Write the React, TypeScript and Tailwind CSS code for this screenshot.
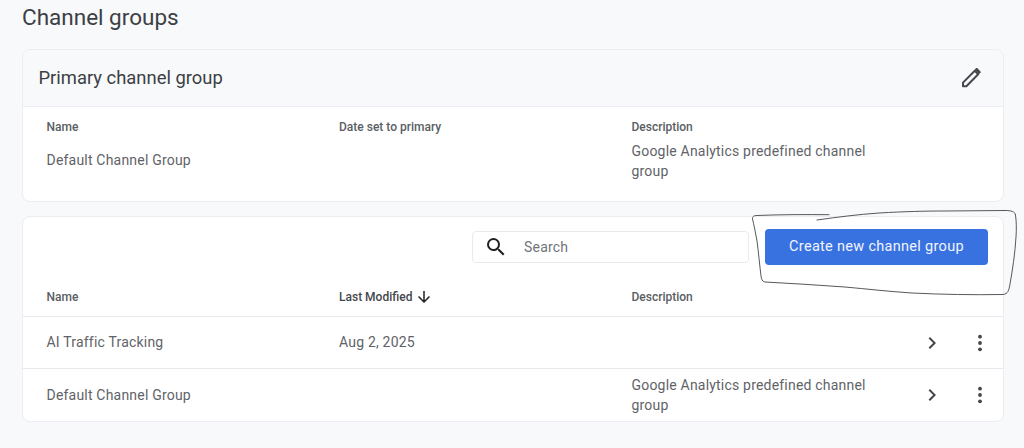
const font = { fontFamily: "Roboto, sans-serif" };

function HeadCell({ children }: { children: React.ReactNode }) {
  return <div className="text-[12px] leading-[16px] font-medium text-[#5a5e63]">{children}</div>;
}

function Pencil() {
  return (
    <svg width="24" height="24" viewBox="0 0 24 24" fill="none" className="text-[#44474c]">
      <path d="M4 20.2v-3.6L15.8 4.8l3.4 3.4L7.4 20.2H4Z" stroke="currentColor" strokeWidth="2" strokeLinejoin="round" />
      <path d="M15.6 3.6 17 2.3c.4-.4 1-.4 1.4 0l3.1 3.1c.4.4.4 1 0 1.4l-1.4 1.3-4.5-4.5Z" fill="currentColor" />
    </svg>
  );
}

function SearchIcon() {
  return (
    <svg width="24" height="24" viewBox="0 0 24 24" fill="#202124">
      <path d="M15.500 14h-.79l-.28-.27A6.470 6.470 0 0 0 16 9.500 6.500 6.500 0 1 0 9.500 16c1.610 0 3.090-.59 4.230-1.570l.27.28v.79l5 4.990L20.490 19l-4.990-5Zm-6 0C7.010 14 5 11.990 5 9.500S7.010 5 9.500 5 14 7.010 14 9.500 11.990 14 9.500 14Z" />
    </svg>
  );
}

function SortArrow() {
  return (
    <svg width="18" height="18" viewBox="0 0 24 24" fill="#202124">
      <path d="m20 12-1.410-1.410L13 16.170V4h-2v12.170l-5.580-5.590L4 12l8 8 8-8Z" />
    </svg>
  );
}

function RowIcons() {
  return (
    <div className="flex items-center gap-[24px] pr-[11px]">
      <svg width="24" height="24" viewBox="0 0 24 24" fill="#44474c">
        <path d="M8.590 16.590 13.170 12 8.590 7.410 10 6l6 6-6 6-1.410-1.410Z" />
      </svg>
      <svg width="24" height="24" viewBox="0 0 24 24" fill="#44474c">
        <circle cx="12" cy="5.700" r="1.900" />
        <circle cx="12" cy="12" r="1.900" />
        <circle cx="12" cy="18.300" r="1.900" />
      </svg>
    </div>
  );
}

function Scribble() {
  return (
    <svg width="1024" height="448" viewBox="0 0 1024 448" fill="none" className="absolute left-0 top-0 pointer-events-none">
      <path
        d="M817 220C838 217 858 214.500 879 213C905 211.500 925 211 945 211L1005 210.500C1011 210.500 1015 211.500 1015.500 215C1016.500 222 1016.500 229 1016 237C1015 254 1012.500 270 1010 284C1009 290 1008 294 1003 294.500C973 295 942 294.500 912 293C889 291.500 867 289 845 287C818 285 792 283.500 765 282C762 281.500 761.500 279 761 276C759.500 264 758.500 252 757 241C755.500 233 754 225 752.500 219C752 216.500 754 215.500 757 215.500C781 214.500 805 214.500 829 214.700"
        stroke="#55585d"
        strokeWidth="1"
        strokeLinecap="round"
      />
    </svg>
  );
}

export default function App() {
  return (
    <div className="relative h-[448px] w-[1024px] overflow-hidden bg-[#f8f9fb] pl-[22px] pr-[20px]" style={font}>
      <h1 className="h-[49px] pt-[3px] text-[22.500px] leading-[28px] font-normal text-[#3c4043]">Channel groups</h1>

      {/* primary group */}
      <section className="h-[153px] overflow-hidden rounded-[8px] border border-[#ebedf0] bg-white">
        <div className="flex h-[57px] items-center justify-between border-b border-[#ebedf0] bg-[#f8f9fb] pl-[15.500px] pr-[20px]">
          <h2 className="text-[18.400px] leading-[24px] font-normal text-[#3c4043]">Primary channel group</h2>
          <Pencil />
        </div>
        <div className="grid grid-cols-[292.500px_292.500px_1fr] pl-[23.500px] pt-[12px]">
          <div>
            <HeadCell>Name</HeadCell>
            <div className="mt-[15px] text-[14px] leading-[20px] tracking-[0.2px] text-[#5f6368]">Default Channel Group</div>
          </div>
          <HeadCell>Date set to primary</HeadCell>
          <div>
            <HeadCell>Description</HeadCell>
            <div className="mt-[6px] w-[260px] text-[14px] leading-[20px] tracking-[0.2px] text-[#5f6368]">
              Google Analytics predefined channel group
            </div>
          </div>
        </div>
      </section>

      {/* all groups */}
      <section className="mt-[14px] h-[206px] overflow-hidden rounded-[8px] border border-[#ebedf0] bg-white">
        <div className="flex h-[63px] items-start justify-end pr-[15px] pt-[12px]">
          <div className="mt-[2px] flex h-[32px] w-[277px] items-center rounded-[4px] border border-[#e8eaed] pl-[11px]">
            <SearchIcon />
            <span className="ml-[16px] text-[14px] tracking-[0.2px] text-[#70757a]">Search</span>
          </div>
          <button className="ml-[16px] h-[36px] w-[223px] rounded-[4px] bg-[#3871e0] text-center text-[14.500px] font-normal tracking-[0.3px] text-[#f1f5fe]">
            Create new channel group
          </button>
        </div>
        <div className="-mt-[1px] grid h-[38px] grid-cols-[292.500px_292.500px_1fr] items-center border-b border-[#e8eaed] pb-[2px] pl-[23.500px]">
          <HeadCell>Name</HeadCell>
          <div className="flex items-center gap-[3px] text-[12px] font-medium text-[#44474c]">
            Last Modified
            <SortArrow />
          </div>
          <HeadCell>Description</HeadCell>
        </div>
        <div className="grid h-[52px] grid-cols-[292.500px_292.500px_1fr_auto] items-center border-b border-[#e8eaed] pl-[23.500px] text-[14px] tracking-[0.2px] text-[#5f6368]">
          <div>AI Traffic Tracking</div>
          <div>Aug 2, 2025</div>
          <div />
          <RowIcons />
        </div>
        <div className="grid h-[52px] grid-cols-[292.500px_292.500px_1fr_auto] items-center pl-[23.500px] text-[14px] tracking-[0.2px] text-[#5f6368]">
          <div>Default Channel Group</div>
          <div />
          <div className="w-[260px] leading-[20.500px]">Google Analytics predefined channel group</div>
          <RowIcons />
        </div>
      </section>
      <Scribble />
    </div>
  );
}
